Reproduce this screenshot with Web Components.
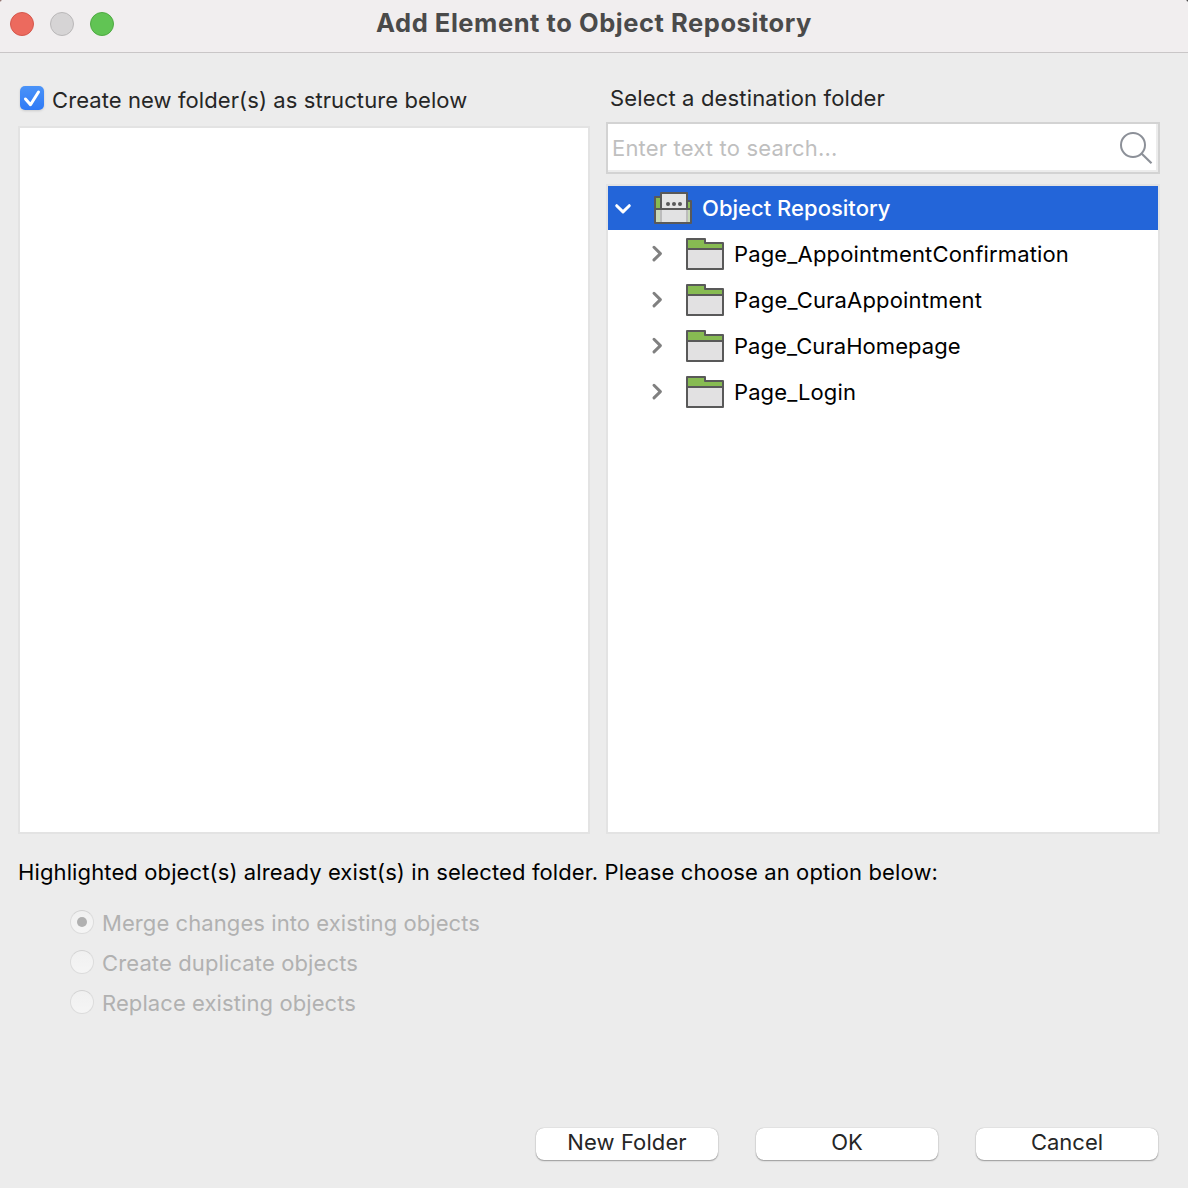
<!DOCTYPE html>
<html lang="en">
<head>
<meta charset="utf-8">
<title>Add Element to Object Repository</title>
<style>
html,body{margin:0;height:100%;overflow:hidden}
body{font-family:Inter,"Liberation Sans",sans-serif;font-size:22px;line-height:28px;color:#262626;background:#ececec}
</style>
</head>
<body>
<repository-dialog></repository-dialog>
<script>
function define(name, html, setup) {
  const template = document.createElement('template');
  template.innerHTML = html;
  customElements.define(name, class extends HTMLElement {
    connectedCallback() {
      if (this.shadowRoot) return;
      this.attachShadow({ mode: 'open' }).append(template.content.cloneNode(true));
      if (setup) setup(this, this.shadowRoot);
    }
  });
}

/* One line of text; span="N" tracks the letters so the line runs N pixels. */
define('text-line', `<style>:host{display:block;white-space:pre;flex:none}span{display:inline-block}</style><span><slot></slot></span>`,
  (el, root) => {
    const target = Number(el.getAttribute('span'));
    if (!target) return;
    const natural = root.querySelector('span').getBoundingClientRect().width;
    el.style.letterSpacing = ((target - natural) / el.textContent.length).toFixed(4) + 'px';
  });

define('traffic-light', `<style>
:host{display:block;box-sizing:border-box;width:24px;height:24px;border-radius:50%;border:1px solid var(--edge);background:var(--fill)}
</style>`);

define('title-bar', `<style>
:host{display:grid;grid-template-columns:1fr auto 1fr;box-sizing:border-box;height:53px;padding:0 10px;
background:radial-gradient(circle at 0 0,#6b3f3a 0,#6b3f3a00 2.2px),radial-gradient(circle at 100% 0,#000 0,#0000 2.2px),#f1eeef;border-bottom:1px solid #c9c6c7}
.lights{display:flex;gap:16px;padding-top:12px}
.red{--fill:#ec6a5e;--edge:#d5574c}.gray{--fill:#d6d4d5;--edge:#bab8b9}.green{--fill:#61c454;--edge:#4faa42}
.title{padding-top:9px;font-size:25.5px;font-weight:700;color:#4a4a4a}
</style>
<div class="lights"><traffic-light class="red"></traffic-light><traffic-light class="gray"></traffic-light><traffic-light class="green"></traffic-light></div>
<div class="title"><slot></slot></div><div></div>`);

define('check-box', `<style>
:host{display:flex;gap:8px;align-items:flex-start}
svg{flex:none;display:block;overflow:visible;filter:drop-shadow(0 1px 1px #0002)}
</style>
<svg width="24" height="24"><defs><linearGradient id="g" x2="0" y2="1"><stop stop-color="#4a93f8"/><stop offset="1" stop-color="#2f7af6"/></linearGradient></defs>
<rect width="24" height="24" rx="5" fill="url(#g)"/><path d="M5.5 13l5 5.7L18.5 6" fill="none" stroke="#fff" stroke-width="3" stroke-linecap="round" stroke-linejoin="round"/></svg>
<div class="label"><slot></slot></div>`);

define('radio-option', `<style>
:host{display:flex;gap:8px;height:40px;align-items:flex-start;color:#b1b1b1}
.dot{box-sizing:border-box;width:24px;height:24px;border:1px solid #dcdcdc;border-top-color:#d2d2d2;border-radius:50%;background:linear-gradient(#f0f0f0,#f5f5f5);display:grid;place-items:center}
:host([checked]) .dot::after{content:"";width:10px;height:10px;border-radius:50%;background:#b0b0b0}
.label{margin-top:-1px}
</style><div class="dot"></div><div class="label"><slot></slot></div>`);

define('search-field', `<style>
:host{display:flex;box-sizing:border-box;height:52px;padding:10px 4px 0 4px;justify-content:space-between;background:#fff;border:2px solid #d3d3d3;box-shadow:inset -2px -2px #ececec;color:#bfbfbf}
svg{flex:none;margin:-10px 0 0}
</style><slot></slot>
<svg width="34" height="48" viewBox="0 0 34 48" fill="none" stroke="#8c9098" stroke-width="2"><circle cx="13" cy="21" r="12"/><path d="M21.5 29.5L31.5 39.3" stroke-width="2.2"/></svg>`);

define('folder-icon', `<style>:host{display:block;flex:none;width:38px;height:32px}svg{display:block}</style>
<svg width="38" height="32" stroke="#595959" stroke-width="2" stroke-linejoin="round">
<path d="M1 11V1h18v4h18v6z" fill="#87bb52"/><path d="M1 11h36v20H1z" fill="#e2e1e2"/></svg>`);

define('repository-icon', `<style>:host{display:block;flex:none;width:38px;height:32px}svg{display:block}</style>
<svg width="38" height="32" stroke="#595959" stroke-width="2" stroke-linejoin="round">
<path d="M1 17V5h6v12zM33 17V9h4v8z" fill="#87bb52"/>
<path d="M7 17V1h26v16z" fill="#e5e5e5"/>
<path d="M1 17h36v14H1z" fill="#e2e2e3"/>
<g stroke="none"><path d="M2 18h4v12H2zM34 18h2v12h-2z" fill="#c8d9b8"/><path d="M6 18h2v12H6zM32 18h2v12h-2z" fill="#bcbcbc"/>
<g fill="#595959"><circle cx="14" cy="12" r="2"/><circle cx="20" cy="12" r="2"/><circle cx="26" cy="12" r="2"/></g></g></svg>`);

define('tree-row', `<style>
:host{display:flex;align-items:center;height:44px;padding-left:38px;color:#000}
:host([expanded]){padding-left:6px;background:#2365d9;color:#fff;font-weight:500}
.arrow{flex:none;width:22px;height:24px;fill:none;stroke:#808080;stroke-width:3;stroke-linecap:round;stroke-linejoin:round}
.down{display:none;stroke:#fff}
:host([expanded]) .down{display:block}:host([expanded]) .right{display:none}
.icon{margin:0 10px 0 18px}
</style>
<svg class="arrow right"><path d="M8 5.3l6.4 6.3L8 17.9"/></svg>
<svg class="arrow down"><path d="M2.7 9.7l6.3 6.2 6.3-6.2"/></svg>
<div class="icon"><slot name="icon"></slot></div><slot></slot>`);

define('list-panel', `<style>
:host{display:flex;flex-direction:column;gap:2px;box-sizing:border-box;background:#fff;border:2px solid #e3e3e3}
</style><slot></slot>`);

define('push-button', `<style>
:host{display:block;width:182px;height:32px}
button{all:unset;box-sizing:border-box;display:flex;justify-content:center;width:182px;height:32px;border-radius:8px;background:#fff;box-shadow:0 0 1px #0005,0 1px 1.5px #0005}
</style><button><slot></slot></button>`);

define('repository-dialog', `<style>
:host{display:flex;flex-direction:column;width:1188px;height:1188px;background:#ececec}
.columns{display:grid;grid-template-columns:572px 554px;column-gap:16px;padding:33px 0 0 18px}
.left,.right{display:flex;flex-direction:column}
.left check-box{height:40px;padding-left:2px}
.left list-panel{height:708px}
.right .caption{height:38px;padding-left:4px;margin-top:-2px}
.right list-panel{height:650px;margin-top:10px}
.notice{padding:24px 0 0 18px;color:#000}
.options{padding:24px 0 0 70px}
.actions{display:flex;justify-content:flex-end;gap:38px;padding:98px 30px 0 0}
</style>
<title-bar><text-line span="436">Add Element to Object Repository</text-line></title-bar>
<div class="columns">
<div class="left"><check-box><text-line span="415.3">Create new folder(s) as structure below</text-line></check-box><list-panel></list-panel></div>
<div class="right">
<div class="caption"><text-line span="275">Select a destination folder</text-line></div>
<search-field><text-line span="225.5">Enter text to search...</text-line></search-field>
<list-panel>
<tree-row expanded><repository-icon slot="icon"></repository-icon><text-line span="188.5">Object Repository</text-line></tree-row>
<tree-row><folder-icon slot="icon"></folder-icon><text-line span="335">Page_AppointmentConfirmation</text-line></tree-row>
<tree-row><folder-icon slot="icon"></folder-icon><text-line span="248">Page_CuraAppointment</text-line></tree-row>
<tree-row><folder-icon slot="icon"></folder-icon><text-line span="226.7">Page_CuraHomepage</text-line></tree-row>
<tree-row><folder-icon slot="icon"></folder-icon><text-line span="122">Page_Login</text-line></tree-row>
</list-panel>
</div>
</div>
<div class="notice"><text-line span="920">Highlighted object(s) already exist(s) in selected folder. Please choose an option below:</text-line></div>
<div class="options">
<radio-option checked><text-line span="378">Merge changes into existing objects</text-line></radio-option>
<radio-option><text-line span="256">Create duplicate objects</text-line></radio-option>
<radio-option><text-line span="254">Replace existing objects</text-line></radio-option>
</div>
<div class="actions">
<push-button><text-line span="119.5">New Folder</text-line></push-button>
<push-button><text-line span="31.5">OK</text-line></push-button>
<push-button><text-line span="72">Cancel</text-line></push-button>
</div>`);
</script>
</body>
</html>
